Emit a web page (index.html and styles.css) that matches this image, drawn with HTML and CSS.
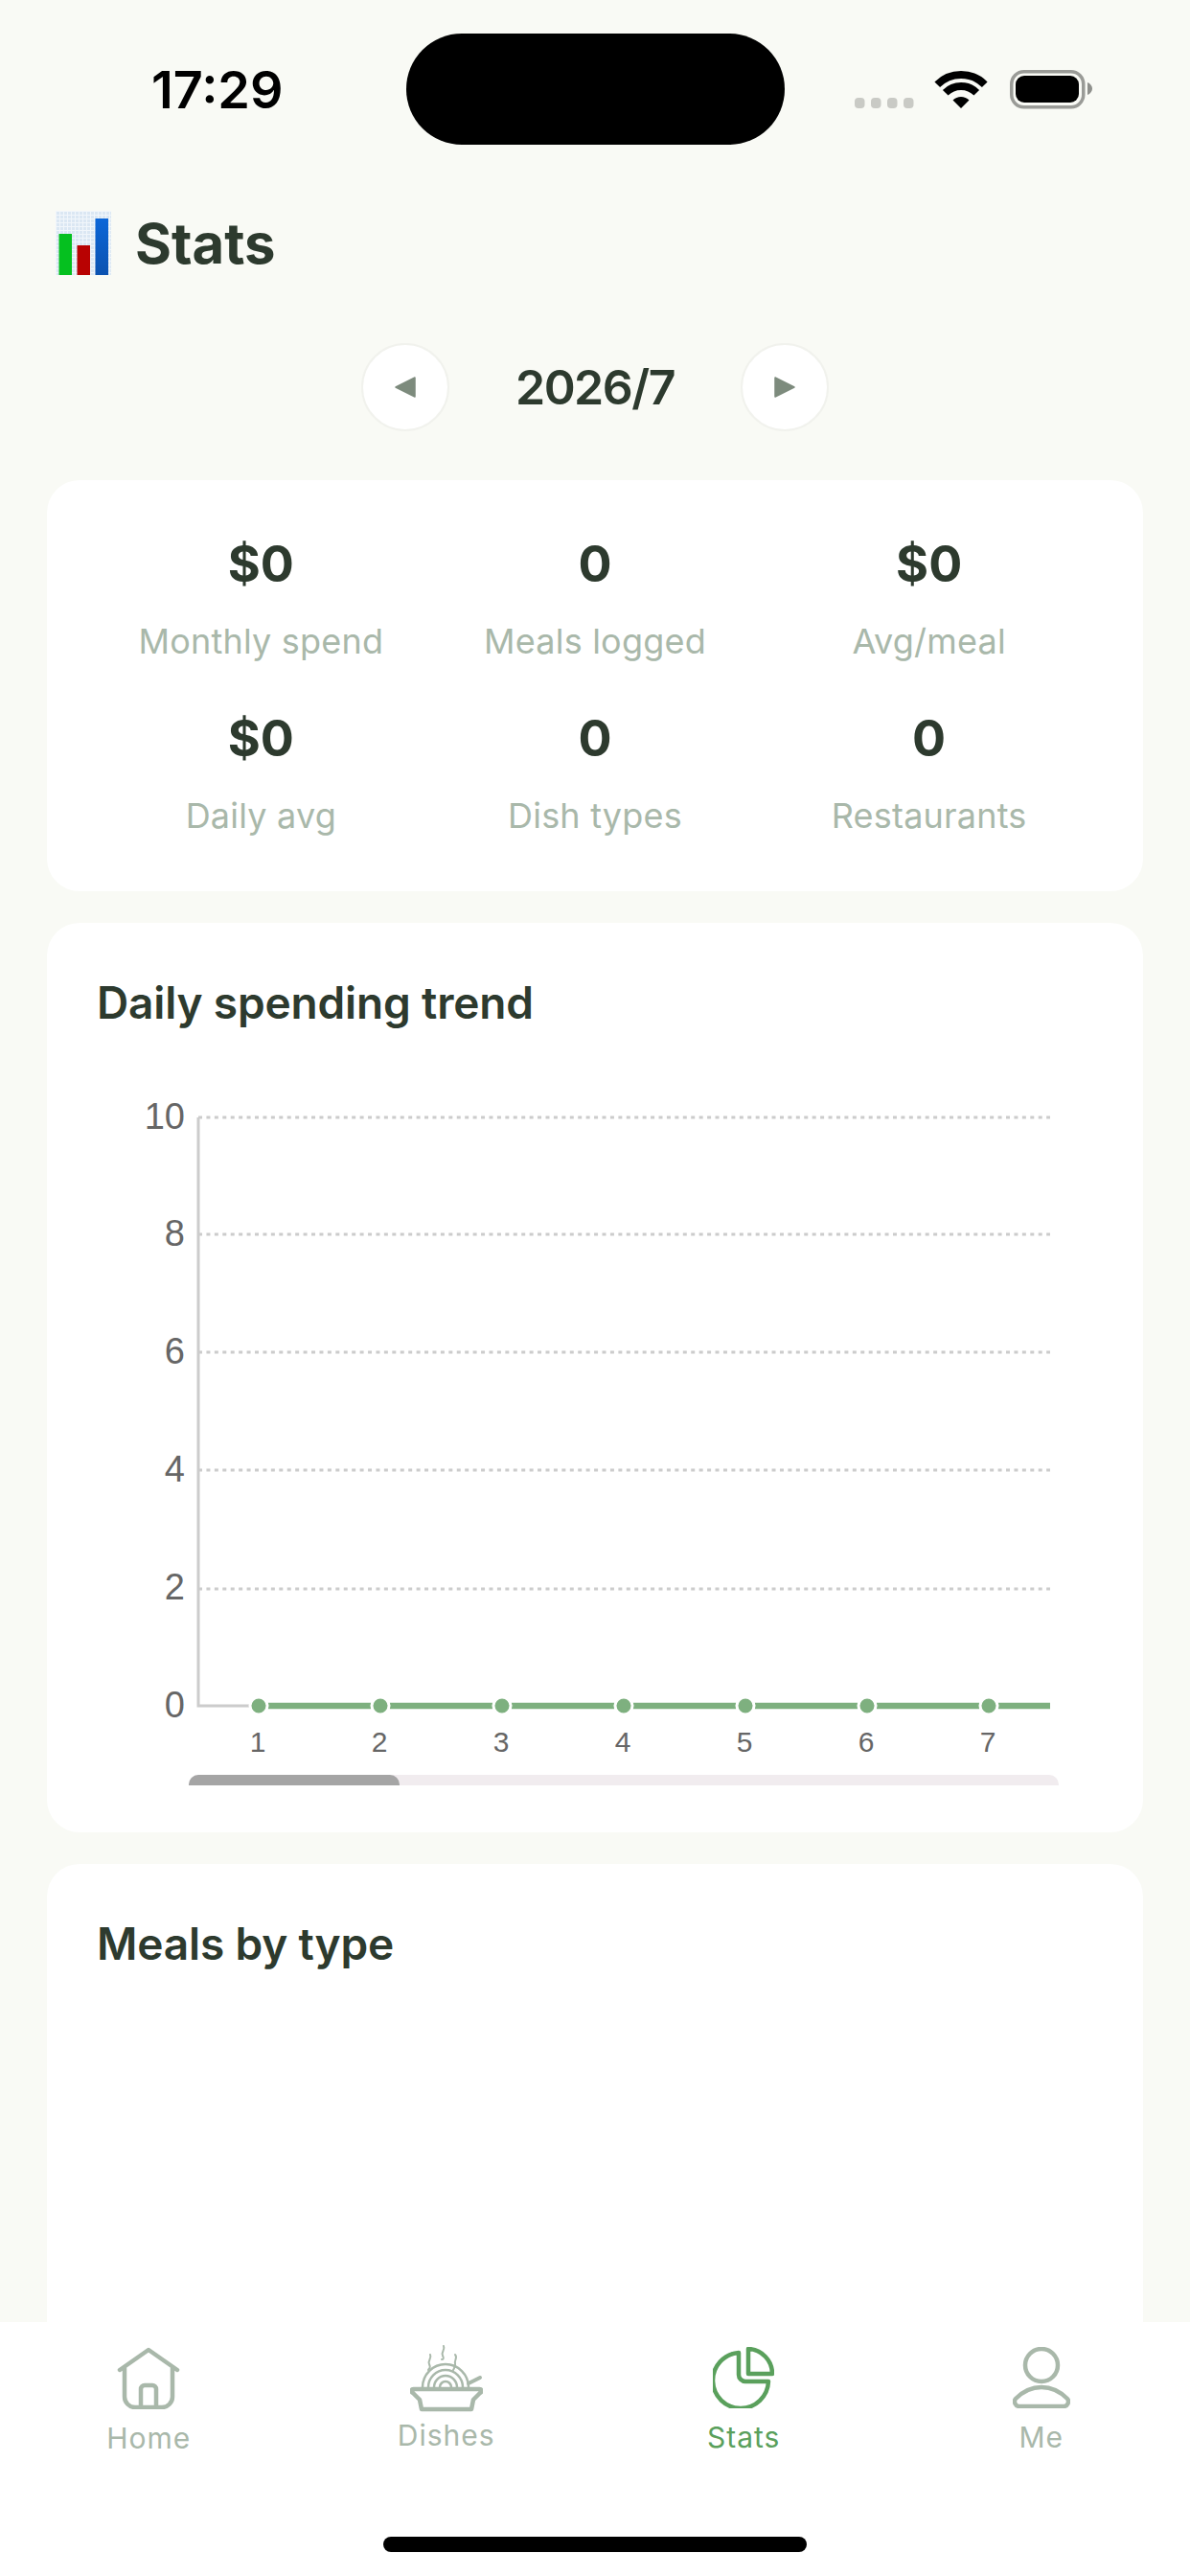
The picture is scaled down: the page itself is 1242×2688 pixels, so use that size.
FILE: index.html
```html
<!DOCTYPE html>
<html lang="en">
<head>
    <meta charset="UTF-8">
    <meta name="viewport" content="width=device-width, initial-scale=1.0">
    <title>Stats</title>
    <link rel="stylesheet" href="styles.css">
</head>
<body>
    <div class="app">
        <div class="status-bar">
            <div class="time">17:29</div>
            <div class="island"></div>
            <div class="status-right">
                <svg class="status-icons" width="252" height="42" viewBox="0 0 252 42">
                    <g fill="#c9cac5">
                        <rect x="2" y="30" width="10.5" height="11" rx="4"/>
                        <rect x="19" y="30" width="10.5" height="11" rx="4"/>
                        <rect x="36" y="30" width="10.5" height="11" rx="4"/>
                        <rect x="53" y="30" width="10.5" height="11" rx="4"/>
                    </g>
                    <path d="M88.25 16.25A35 35 0 0 1 137.75 16.25M96.74 24.74A23 23 0 0 1 129.26 24.74" fill="none" stroke="#000" stroke-width="8"/>
                    <path d="M113 41L104.5 32.5A12 12 0 0 1 121.5 32.5Z" fill="#000"/>
                    <rect x="165.75" y="2.75" width="75" height="37" rx="13" fill="none" stroke="#9a9b97" stroke-width="3.5"/>
                    <rect x="170" y="7" width="66" height="28" rx="9" fill="#000"/>
                    <path d="M245 14c3 1 5 4 5 6.5s-2 5.5-5 6.5Z" fill="#8f908c"/>
                </svg>
            </div>
        </div>

        <main class="content">
            <h1 class="page-title">
                <svg class="title-icon" width="58" height="67" viewBox="0 0 58 67">
                    <defs>
                        <pattern id="chart-grid" width="4" height="4" patternUnits="userSpaceOnUse">
                            <rect width="4" height="4" fill="#dbe7f3"/>
                            <path d="M0 .5H4M.5 0V4" stroke="#f1f6fb" stroke-width="1"/>
                        </pattern>
                        <linearGradient id="bar-blue" x1="0" y1="0" x2="0" y2="1">
                            <stop offset="0" stop-color="#0c66d8"/>
                            <stop offset="1" stop-color="#0b52b0"/>
                        </linearGradient>
                    </defs>
                    <rect width="58" height="67" fill="url(#chart-grid)"/>
                    <rect x="3.5" y="24" width="13.5" height="43" fill="#05c01f"/>
                    <rect x="22.5" y="36" width="13.5" height="31" fill="#b80202"/>
                    <rect x="41.5" y="8" width="13.5" height="59" fill="url(#bar-blue)"/>
                </svg>
                <span>Stats</span>
            </h1>

            <div class="month-nav">
                <button class="nav-btn">
                    <svg width="24" height="24" viewBox="0 0 24 24"><path d="M2 12L22 2V22Z" fill="#7d8b7d" stroke="#7d8b7d" stroke-width="1.5" stroke-linejoin="round"/></svg>
                </button>
                <div class="month-label">2026/7</div>
                <button class="nav-btn">
                    <svg width="24" height="24" viewBox="0 0 24 24"><path d="M22 12L2 2V22Z" fill="#7d8b7d" stroke="#7d8b7d" stroke-width="1.5" stroke-linejoin="round"/></svg>
                </button>
            </div>

            <section class="card summary">
                <div class="stat"><div class="stat-value">$0</div><div class="stat-label">Monthly spend</div></div>
                <div class="stat"><div class="stat-value">0</div><div class="stat-label">Meals logged</div></div>
                <div class="stat"><div class="stat-value">$0</div><div class="stat-label">Avg/meal</div></div>
                <div class="stat"><div class="stat-value">$0</div><div class="stat-label">Daily avg</div></div>
                <div class="stat"><div class="stat-value">0</div><div class="stat-label">Dish types</div></div>
                <div class="stat"><div class="stat-value">0</div><div class="stat-label">Restaurants</div></div>
            </section>

            <section class="card chart-card">
                <h2 class="card-title">Daily spending trend</h2>
                <svg class="chart" width="1040" height="690" viewBox="0 0 1040 690">
                    <g class="grid-lines">
                        <line x1="106" y1="15" x2="995" y2="15"/>
                        <line x1="106" y1="137" x2="995" y2="137"/>
                        <line x1="106" y1="260" x2="995" y2="260"/>
                        <line x1="106" y1="383" x2="995" y2="383"/>
                        <line x1="106" y1="507" x2="995" y2="507"/>
                    </g>
                    <path class="axis" d="M106 15V629H169"/>
                    <line class="trend" x1="169" y1="629" x2="995" y2="629"/>
                    <g class="dots">
                        <circle cx="169" cy="629" r="9"/>
                        <circle cx="296" cy="629" r="9"/>
                        <circle cx="423" cy="629" r="9"/>
                        <circle cx="550" cy="629" r="9"/>
                        <circle cx="677" cy="629" r="9"/>
                        <circle cx="804" cy="629" r="9"/>
                        <circle cx="931" cy="629" r="9"/>
                    </g>
                    <g class="y-labels">
                        <text x="92" y="27">10</text>
                        <text x="92" y="149">8</text>
                        <text x="92" y="272">6</text>
                        <text x="92" y="395">4</text>
                        <text x="92" y="518">2</text>
                        <text x="92" y="641">0</text>
                    </g>
                    <g class="x-labels">
                        <text x="168" y="677">1</text>
                        <text x="295" y="677">2</text>
                        <text x="422" y="677">3</text>
                        <text x="549" y="677">4</text>
                        <text x="676" y="677">5</text>
                        <text x="803" y="677">6</text>
                        <text x="930" y="677">7</text>
                    </g>
                </svg>
                <div class="scroll-track"><div class="scroll-thumb"></div></div>
            </section>

            <section class="card types-card">
                <h2 class="card-title">Meals by type</h2>
            </section>
        </main>

        <nav class="tab-bar">
            <div class="tabs">
                <div class="tab">
                    <svg class="tab-icon" width="66" height="65" viewBox="0 0 66 65">
                        <path d="M3 24L33 3L63 24M8 22V52a11 11 0 0 0 11 11H47a11 11 0 0 0 11-11V22M25 63V44a4 4 0 0 1 4-4H37a4 4 0 0 1 4 4V63"/>
                    </svg>
                    <span class="tab-label">Home</span>
                </div>
                <div class="tab tab-dishes">
                    <svg class="tab-icon" width="76" height="71" viewBox="0 0 76 71">
                        <path d="M4 47H72a2 2 0 0 1 1 4L66 58L64 68H12L10 58L3 51a2 2 0 0 1 1-4Z" stroke-width="4.5"/>
                        <path d="M13 45a24 24 0 0 1 48 0M19 45a18 18 0 0 1 36 0M25 45a12 12 0 0 1 24 0M31 45a6 6 0 0 1 12 0" stroke-width="2.5"/>
                        <path d="M61 41L73 35" stroke-width="4"/>
                        <path d="M21 11c2 4-3 6-1 10s0 4-1 6M35 2c2 4-3 6-1 10s0 4-1 4M47 11c3 3-1 6 0 9s-1 5-2 7" stroke-width="2"/>
                    </svg>
                    <span class="tab-label">Dishes</span>
                </div>
                <div class="tab tab-active">
                    <svg class="tab-icon" width="64" height="64" viewBox="0 0 64 64">
                        <path d="M27 6A29 29 0 1 0 58 36H34a7 7 0 0 1-7-7Z"/>
                        <path d="M37 2A26 26 0 0 1 62 28H37Z"/>
                    </svg>
                    <span class="tab-label">Stats</span>
                </div>
                <div class="tab">
                    <svg class="tab-icon" width="60" height="64" viewBox="0 0 60 64">
                        <circle cx="30" cy="19" r="17"/>
                        <path d="M7 62H53a5 5 0 0 0 4-8C50 47 41 42 30 42C19 42 10 47 3 54a5 5 0 0 0 4 8Z"/>
                    </svg>
                    <span class="tab-label">Me</span>
                </div>
            </div>
            <div class="home-indicator"></div>
        </nav>
    </div>
</body>
</html>
```

FILE: styles.css
```css
* {
    box-sizing: border-box;
}

body {
    margin: 0;
    font-family: Inter, "Noto Sans", sans-serif;
    background-color: #f9faf5;
    color: #2d3a2e;
}

.app {
    display: flex;
    flex-direction: column;
    width: 1242px;
    height: 2688px;
    overflow: hidden;
}

/* status bar */
.status-bar {
    display: grid;
    grid-template-columns: 424px 395px 1fr;
    align-items: center;
    flex-shrink: 0;
    padding-top: 35px;
}

.time {
    padding-left: 158px;
    font-size: 54px;
    font-weight: 600;
    color: #000;
}

.island {
    height: 116px;
    border-radius: 58px;
    background-color: #000;
}

.status-right {
    padding-left: 71px;
}

.status-icons {
    display: block;
}

/* page content */
.content {
    flex: 1;
    min-height: 0;
    overflow: hidden;
    padding: 69px 49px 0;
}

.page-title {
    display: flex;
    align-items: center;
    gap: 25px;
    height: 67px;
    margin: 0 0 71px 9px;
    font-size: 58px;
    font-weight: 700;
}

.title-icon {
    display: block;
    flex-shrink: 0;
}

.month-nav {
    display: flex;
    justify-content: center;
    align-items: center;
    height: 92px;
    margin-bottom: 51px;
}

.month-label {
    width: 304px;
    text-align: center;
    font-size: 50px;
    font-weight: 600;
    letter-spacing: -1.5px;
}

.nav-btn {
    display: flex;
    justify-content: center;
    align-items: center;
    width: 92px;
    height: 92px;
    padding: 0;
    border: 2px solid #f1f2ed;
    border-radius: 50%;
    background-color: #fff;
}

.card {
    border-radius: 34px;
    background-color: #fff;
    margin-bottom: 33px;
}

.summary {
    display: grid;
    grid-template-columns: repeat(3, 1fr);
    align-content: start;
    row-gap: 42px;
    height: 429px;
    padding: 54px 49px 0;
}

.stat {
    text-align: center;
}

.stat-value {
    font-size: 52px;
    font-weight: 700;
    line-height: 68px;
}

.stat-label {
    margin-top: 20px;
    font-size: 36px;
    line-height: 52px;
    letter-spacing: 0.2px;
    color: #a9b8aa;
}

.chart-card {
    height: 949px;
    padding: 55px 52px 0;
}

.card-title {
    margin: 0 0 77px;
    font-size: 46px;
    font-weight: 600;
    line-height: 56px;
    letter-spacing: -0.15px;
}

.chart {
    display: block;
}

.grid-lines line {
    stroke: #ccc;
    stroke-width: 3;
    stroke-dasharray: 4 4.43;
}

.axis {
    fill: none;
    stroke: #ccc;
    stroke-width: 3;
}

.trend {
    stroke: #7eb07f;
    stroke-width: 6.5;
}

.dots circle {
    fill: #7eb07f;
    stroke: #fff;
    stroke-width: 3;
}

.y-labels text {
    font-family: "Liberation Sans", Arial, sans-serif;
    font-size: 38px;
    fill: #666;
    text-anchor: end;
}

.x-labels text {
    font-family: "Liberation Sans", Arial, sans-serif;
    font-size: 30px;
    fill: #666;
    text-anchor: middle;
}

.scroll-track {
    width: 908px;
    height: 11px;
    margin-left: 96px;
    margin-top: 11px;
    border-radius: 10px 10px 0 0;
    background-color: #f1ecef;
}

.scroll-thumb {
    width: 220px;
    height: 11px;
    border-radius: 10px 10px 0 0;
    background-color: #a5a5a5;
}

.types-card {
    height: 900px;
    padding: 55px 52px 0;
}

/* bottom tabs */
.tab-bar {
    position: relative;
    flex-shrink: 0;
    height: 265px;
    background-color: #fff;
}

.tabs {
    display: grid;
    grid-template-columns: repeat(4, 1fr);
    padding-top: 26px;
}

.tab {
    display: flex;
    flex-direction: column;
    align-items: center;
    color: #a9b8aa;
}

.tab-icon {
    display: block;
    fill: none;
    stroke: currentColor;
    stroke-width: 4.5;
    stroke-linecap: round;
    stroke-linejoin: round;
}

.tab-label {
    margin-top: 12px;
    font-size: 30px;
    line-height: 36px;
    letter-spacing: 1px;
}

.tab-dishes {
    margin-top: -3px;
}

.tab-dishes .tab-label {
    margin-top: 6px;
}

.tab-active {
    color: #5aa05c;
}

.home-indicator {
    position: absolute;
    left: 400px;
    bottom: 25px;
    width: 442px;
    height: 16px;
    border-radius: 8px;
    background-color: #000;
}
```
